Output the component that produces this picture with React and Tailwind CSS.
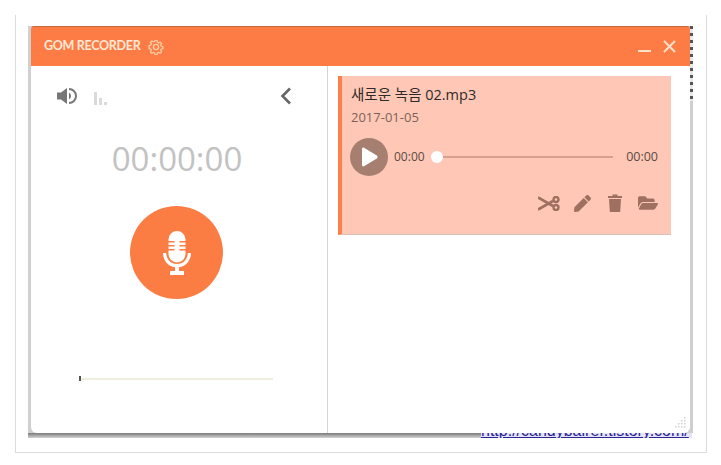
import React from "react";
import { FaPen, FaFolderOpen } from "react-icons/fa";

function Gear() {
    return (
        <svg width="16" height="16" viewBox="0 0 16 16" fill="none" stroke="#ffcfa6" strokeWidth="1.4">
            <path d="M6.800 1.200h2.400l.4 1.900 1.300.6 1.700-1 1.600 1.700-1 1.600.6 1.400 1.900.4v2.400l-1.900.4-.6 1.300 1 1.700-1.600 1.600-1.700-1-1.300.6-.4 1.900H6.800l-.4-1.900-1.300-.6-1.700 1-1.600-1.600 1-1.700-.6-1.300-1.900-.4V6.600l1.900-.4.6-1.400-1-1.600 1.600-1.700 1.700 1 1.300-.6z" transform="translate(.8 .6) scale(.9)" />
            <circle cx="8" cy="8" r="2.600" />
        </svg>
    );
}

function Speaker() {
    return (
        <svg width="20" height="18" viewBox="0 0 20 18" fill="#777">
            <path d="M0 5.500h4L10 1v16l-6-4.500H0z" />
            <path d="M12 5.500a4 4 0 0 1 0 7z" />
            <path d="M12 1a8 8 0 0 1 0 16v-2a6 6 0 0 0 0-12z" />
        </svg>
    );
}

function Bars() {
    return (
        <svg width="13" height="14" viewBox="0 0 13 14" fill="#dadada">
            <rect x="0" y="1" width="3" height="13" />
            <rect x="5" y="7" width="3" height="7" />
            <rect x="10" y="11" width="3" height="3" />
        </svg>
    );
}

function Mic() {
    return (
        <svg width="28" height="44" viewBox="0 0 28 44" fill="#fff">
            <path d="M14 0a8.500 8.500 0 0 1 8.500 8.500V10h-6v1.500h6V14h-6v1.500h6V18h-6v1.500h6V23a8.500 8.500 0 0 1-17 0v-3.500h6V18h-6v-2.500h6V14h-6v-2.500h6V10h-6V8.500A8.500 8.500 0 0 1 14 0z" />
            <path d="M0 22h3.200c.3 6.500 4.500 11 10.800 11s10.500-4.500 10.800-11H28c-.2 8-5.500 13.500-12 14.200V40h5v4H7v-4h5v-3.800C5.500 35.500.2 30 0 22z" />
        </svg>
    );
}

function Scissors() {
    return (
        <svg width="22" height="15" viewBox="0 0 22 15" fill="none" stroke="#9f6f60">
            <path d="M0 1.500 15 10M0 13.500 15 5" strokeWidth="2.600" />
            <circle cx="18" cy="3.500" r="2.500" strokeWidth="2.400" />
            <circle cx="18" cy="11.500" r="2.500" strokeWidth="2.400" />
        </svg>
    );
}

function Trash() {
    return (
        <svg width="14" height="18" viewBox="0 0 14 18" fill="#9f6f60">
            <path d="M0 2h4.500V.5h5V2H14v2H0z" />
            <path d="M1 5h12l-.8 13H1.800z" />
        </svg>
    );
}

function ResizeGrip() {
    return (
        <svg width="12" height="12" viewBox="0 0 12 12" fill="#cfcfcf">
            <rect x="9" y="0" width="1.500" height="1.500" />
            <rect x="6" y="3" width="1.500" height="1.500" />
            <rect x="9" y="3" width="1.500" height="1.500" />
            <rect x="3" y="6" width="1.500" height="1.500" />
            <rect x="6" y="6" width="1.500" height="1.500" />
            <rect x="9" y="6" width="1.500" height="1.500" />
            <rect x="0" y="9" width="1.500" height="1.500" />
            <rect x="3" y="9" width="1.500" height="1.500" />
            <rect x="6" y="9" width="1.500" height="1.500" />
            <rect x="9" y="9" width="1.500" height="1.500" />
        </svg>
    );
}

function LeftPanel() {
    return (
        <div className="w-[297px] h-full border-r border-[#d4d4d4] flex flex-col pt-[20px]">
            <div className="flex items-center h-[20px] pl-[26px] pr-[35px]">
                <Speaker />
                <div className="ml-[17px] mt-[4px]"><Bars /></div>
                <svg className="ml-auto" width="12" height="18" viewBox="0 0 12 18" fill="none" stroke="#666" strokeWidth="2.600">
                    <path d="M10 1.500 2.500 9l7.500 7.500" />
                </svg>
            </div>
            <div className="mt-[33px] h-[40px] flex items-center justify-center text-[33px] font-normal text-[#c2c2c2] font-['Open_Sans',sans-serif] pr-[4px]">
                00:00:00
            </div>
            <div className="mt-[27px] self-center mr-[5px] w-[93px] h-[93px] rounded-full bg-[#fb7d43] flex items-center justify-center">
                <Mic />
            </div>
            <div className="mt-[77px] ml-[48px] w-[194px] h-[5px] flex items-center">
                <div className="w-[2px] h-[5px] bg-[#555]"></div>
                <div className="flex-1 h-[2px] bg-[#f1efdc]"></div>
            </div>
        </div>
    );
}

function RecordCard() {
    return (
        <div className="w-[333px] h-[159px] bg-[#ffc8b6] border-l-4 border-[#fb8049] border-b border-b-[#d8c0b8] pl-[9px] pr-[13px] pt-[9px] font-['Open_Sans','Noto_Sans_CJK_KR',sans-serif]">
            <div className="text-[14.500px] leading-[20px] text-[#2f2a28]">새로운 녹음 02.mp3</div>
            <div className="mt-[4px] text-[13px] leading-[16px] text-[#7d6259]">2017-01-05</div>
            <div className="mt-[13px] -ml-[1px] flex items-center h-[38px]">
                <div className="w-[38px] h-[38px] rounded-full bg-[#a67f70] flex items-center justify-center">
                    <svg width="17" height="20" viewBox="0 0 17 20" fill="#fff">
                        <path d="M1 2.200C1 .8 2.200.2 3.400.9l12.400 7.700c1.100.7 1.100 2.100 0 2.800L3.400 19.100C2.200 19.800 1 19.200 1 17.800z" />
                    </svg>
                </div>
                <span className="ml-[6px] w-[32px] text-[12px] text-[#5c4a43]">00:00</span>
                <div className="ml-[5px] w-[12px] h-[12px] rounded-full bg-white"></div>
                <div className="w-[170px] h-[2px] bg-[#d99f8c]"></div>
                <span className="ml-auto text-[12.500px] text-[#5c4a43]">00:00</span>
            </div>
            <div className="mt-[17px] flex items-center justify-end h-[20px] text-[#9f6f60]">
                <Scissors />
                <FaPen size={17} className="ml-[14px]" />
                <div className="ml-[17px]"><Trash /></div>
                <FaFolderOpen size={20} className="ml-[16px]" />
            </div>
        </div>
    );
}

function App() {
    return (
        <div className="w-[721px] h-[465px] bg-white overflow-hidden pt-[15px] pl-[15px]">
            <div className="w-[692px] h-[438px] border-l border-r border-b border-[#dcdcdc] pt-[11px] pl-[12px] flex flex-col">
                <div className="flex w-[665px] h-[407px] bg-[#cfcfcf]">
                    <div className="w-[3px] h-full bg-[#d0d0d0]"></div>
                    <div className="w-[659px] h-full bg-white rounded-b-[6px] rounded-t-[3px] flex flex-col overflow-hidden">
                        <div className="h-[40px] shrink-0 bg-[#fd7c45] border-t border-[#c9683f] flex items-center pl-[13px] pr-[14px]">
                            <span className="text-[12.500px] font-bold tracking-[-0.3px] text-[#ffe8d6] font-['Lato',sans-serif]">GOM RECORDER</span>
                            <div className="ml-[8px]"><Gear /></div>
                            <div className="ml-auto mt-[8px] w-[13px] h-[2px] bg-[#ffe0c8]"></div>
                            <svg className="ml-[12px]" width="13" height="13" viewBox="0 0 13 13" stroke="#ffe0c8" strokeWidth="2">
                                <path d="M1 1l11 11M12 1 1 12" />
                            </svg>
                        </div>
                        <div className="flex flex-1 min-h-0">
                            <LeftPanel />
                            <div className="flex-1 pt-[10px] pl-[10px] pr-[3px] pb-[4px] flex flex-col">
                                <RecordCard />
                                <div className="mt-auto self-end"><ResizeGrip /></div>
                            </div>
                        </div>
                    </div>
                    <div className="w-[3px] h-full flex flex-col">
                        <div className="h-[75px] bg-[repeating-linear-gradient(180deg,#555_0px,#555_3px,#e8e8e8_3px,#e8e8e8_7px)]"></div>
                    </div>
                </div>
                <div className="h-[5px] flex">
                    <div className="w-[453px] h-full bg-gradient-to-b from-[#7a7a7a] to-[#d4d4d4]"></div>
                    <div className="w-[211px] h-full overflow-hidden bg-[#e4e4f6]">
                        <div className="-mt-[11px] text-[16px] leading-[18px] whitespace-nowrap text-[#2a2496] underline font-['Liberation_Sans',sans-serif]">http://candybalref.tistory.com/</div>
                    </div>
                </div>
            </div>
        </div>
    );
}

export default App;
